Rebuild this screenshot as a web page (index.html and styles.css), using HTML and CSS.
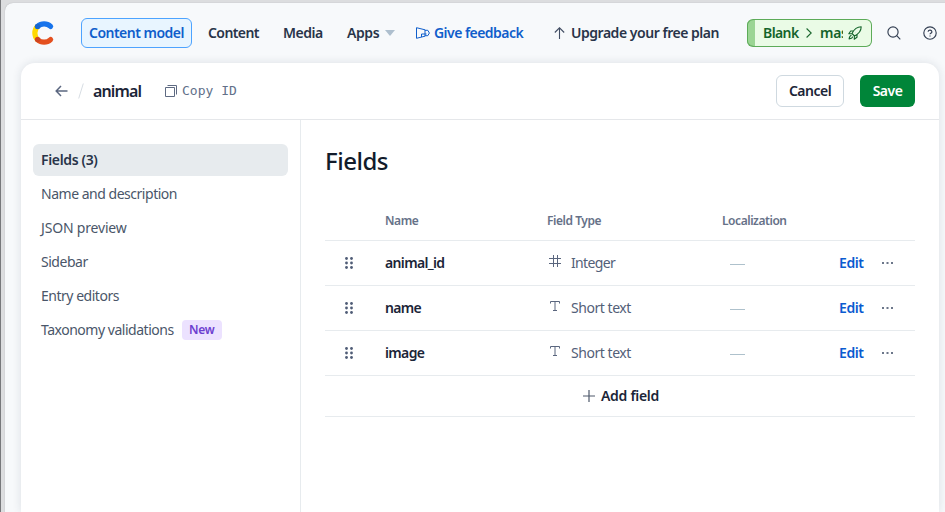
FILE: index.html
```html
<!DOCTYPE html>
<html lang="en">
<head>
<meta charset="utf-8">
<title>animal - Content model</title>
<link rel="stylesheet" href="styles.css">
</head>
<body>
<div class="app">
  <header class="topbar">
    <svg class="logo" width="24" height="26" viewBox="0 0 24 26" fill="none" stroke-width="5.2" stroke-linecap="round">
      <path d="M6.600 6.400A9.300 9.300 0 0 0 6.600 19.600" stroke="#ffd900"/>
      <path d="M6.600 6.400A9.500 9.500 0 0 1 19.600 6.400" stroke="#1773eb"/>
      <path d="M6.600 19.600A9.500 9.500 0 0 0 19.600 19.600" stroke="#e4501f"/>
      <circle cx="6.600" cy="6.400" r="2.700" fill="#1666d0"/>
      <circle cx="6.600" cy="19.600" r="2.700" fill="#cf4420"/>
    </svg>
    <nav class="nav">
      <a class="nav-item active">Content model</a>
      <a class="nav-item content">Content</a>
      <a class="nav-item media">Media</a>
      <a class="nav-item apps">Apps<svg class="caret" width="10" height="6" viewBox="0 0 10 6"><path d="M0 0h10L5 6z" fill="#aebfce"/></svg></a>
    </nav>
    <a class="feedback">
      <svg width="14" height="12" viewBox="0 0 14 12" fill="none" stroke="#0f5ecb"><path d="M.5.7v10.600L9 9.200V2.800L.5.7z"/><path d="M9 3.300h2.800l1.600 2.700-1.600 2.700H9M5.500 10v-3h5"/></svg>
      <span>Give feedback</span>
    </a>
    <a class="upgrade">
      <svg width="12" height="12" viewBox="0 0 12 12" fill="none" stroke="#414d63" stroke-width="1.1"><path d="M5.500 12V.8M.8 5.500 5.500.8l4.700 4.700"/></svg>
      <span>Upgrade your free plan</span>
    </a>
    <div class="environment">
      <span class="space">Blank</span>
      <svg class="chevron" width="6" height="10" viewBox="0 0 6 10" fill="none" stroke="#1a662c" stroke-width="1.1"><path d="M.6.5 5.200 5 .6 9.500"/></svg>
      <span class="env-name">master</span>
      <svg class="rocket" width="14" height="14" viewBox="0 0 14 14" fill="none" stroke="#14642b" stroke-width="1.100" stroke-linejoin="round"><path d="M4 7.500C6 3.500 9 .8 13.200.8c0 4.200-2.700 7.200-6.700 9.200zM5.300 5H2.700L.8 7.800l3.200-.3M9 8.700v2.600l-2.800 1.900.3-3.200M3.500 9.200c-1.800.3-2.200 2-2.400 3.700 1.700-.2 3.400-.6 3.700-2.400"/><path d="M7.500 6.500h.1"/></svg>
    </div>
    <svg class="search" width="14" height="14" viewBox="0 0 14 14" fill="none" stroke="#333f52" stroke-width="1.150"><circle cx="6" cy="6" r="5.100"/><path d="m9.700 9.700 3.600 3.600"/></svg>
    <svg class="help" width="14" height="14" viewBox="0 0 14 14" fill="none" stroke="#333f52" stroke-width="1.150"><circle cx="7" cy="7" r="6.200"/><path d="M5.100 5.800a1.900 1.700 0 1 1 2.500 1.600Q7 7.700 7 8.300"/><path d="M7 9.400v1.200"/></svg>
  </header>
  <main class="workbench">
    <div class="titlebar">
      <svg class="back" width="13" height="12" viewBox="0 0 13 12" fill="none" stroke="#5b6780" stroke-width="1.500"><path d="M12.500 6H1.200M6 1.100 1.200 6 6 10.900"/></svg>
      <svg class="slash" width="6" height="16" viewBox="0 0 6 16" stroke="#d7dde3"><path d="M5.300.5.700 15.500"/></svg>
      <h1 class="title">animal</h1>
      <svg class="copy" width="12" height="12" viewBox="0 0 12 12" fill="none" stroke="#5e6a82"><path d="M.5 2.500h9v9h-9zM2.500.5h9v9"/></svg>
      <span class="copy-id">Copy ID</span>
      <button class="button cancel">Cancel</button>
      <button class="button save">Save</button>
    </div>
    <div class="body">
      <aside class="sidebar">
        <a class="side-item selected">Fields (3)</a>
        <a class="side-item">Name and description</a>
        <a class="side-item wide">JSON preview</a>
        <a class="side-item">Sidebar</a>
        <a class="side-item">Entry editors</a>
        <a class="side-item">Taxonomy validations<span class="badge">New</span></a>
      </aside>
      <section class="fields">
        <h2 class="heading">Fields</h2>
        <div class="row head"><span></span><span>Name</span><span>Field Type</span><span>Localization</span></div>
        <div class="row">
          <svg class="grip" width="8" height="12" viewBox="0 0 8 12" fill="#4f5c76"><circle cx="1.500" cy="1.500" r="1.400"/><circle cx="6.500" cy="1.500" r="1.400"/><circle cx="1.500" cy="6" r="1.400"/><circle cx="6.500" cy="6" r="1.400"/><circle cx="1.500" cy="10.500" r="1.400"/><circle cx="6.500" cy="10.500" r="1.400"/></svg>
          <strong class="name">animal_id</strong>
          <span class="type"><svg width="12" height="12" viewBox="0 0 12 12" fill="none" stroke="#5a667e"><path d="M4.500 0v12M8.500 0v12M0 3.500h12M0 8.500h12"/></svg><span class="integer">Integer</span></span>
          <span class="dash"></span><a class="edit">Edit</a>
          <svg class="more" width="11" height="2" viewBox="0 0 11 2" fill="#6c778a"><path d="M0 0h2v2H0zM4.500 0h2v2h-2zM9 0h2v2H9z"/></svg>
        </div>
        <div class="row">
          <svg class="grip" width="8" height="12" viewBox="0 0 8 12" fill="#4f5c76"><circle cx="1.500" cy="1.500" r="1.400"/><circle cx="6.500" cy="1.500" r="1.400"/><circle cx="1.500" cy="6" r="1.400"/><circle cx="6.500" cy="6" r="1.400"/><circle cx="1.500" cy="10.500" r="1.400"/><circle cx="6.500" cy="10.500" r="1.400"/></svg>
          <strong class="name">name</strong>
          <span class="type"><svg width="12" height="12" viewBox="0 0 12 12" fill="none" stroke="#5a667e"><path d="M1.500 3.500v-2h9v2M6 1.500v9.500M4 10.500h4"/></svg><span>Short text</span></span>
          <span class="dash"></span><a class="edit">Edit</a>
          <svg class="more" width="11" height="2" viewBox="0 0 11 2" fill="#6c778a"><path d="M0 0h2v2H0zM4.500 0h2v2h-2zM9 0h2v2H9z"/></svg>
        </div>
        <div class="row">
          <svg class="grip" width="8" height="12" viewBox="0 0 8 12" fill="#4f5c76"><circle cx="1.500" cy="1.500" r="1.400"/><circle cx="6.500" cy="1.500" r="1.400"/><circle cx="1.500" cy="6" r="1.400"/><circle cx="6.500" cy="6" r="1.400"/><circle cx="1.500" cy="10.500" r="1.400"/><circle cx="6.500" cy="10.500" r="1.400"/></svg>
          <strong class="name">image</strong>
          <span class="type"><svg width="12" height="12" viewBox="0 0 12 12" fill="none" stroke="#5a667e"><path d="M1.500 3.500v-2h9v2M6 1.500v9.500M4 10.500h4"/></svg><span>Short text</span></span>
          <span class="dash"></span><a class="edit">Edit</a>
          <svg class="more" width="11" height="2" viewBox="0 0 11 2" fill="#6c778a"><path d="M0 0h2v2H0zM4.500 0h2v2h-2zM9 0h2v2H9z"/></svg>
        </div>
        <div class="add"><svg width="12" height="12" viewBox="0 0 12 12" stroke="#4e596b" stroke-width="1.200"><path d="M6 0v12M0 6h12"/></svg><span>Add field</span></div>
      </section>
    </div>
  </main>
</div>
</body>
</html>
```

FILE: styles.css
```css
* { box-sizing: border-box; }
body {
  margin: 0;
  height: 512px;
  overflow: hidden;
  padding: 3px 0 0 4px;
  background: #dcdddf;
  border-left: 1px solid #77787b;
  font: 400 14px/20px "Noto Sans", "Open Sans", sans-serif;
  color: #1b2537;
}
svg { flex: none; display: block; }
a, span, strong { white-space: nowrap; }
.app { height: 509px; background: #f7f9fb; border-radius: 8px 0 0 0; box-shadow: 0 0 1px #9b9da1; }
.topbar { height: 60px; padding-left: 26px; display: flex; align-items: center; font-weight: 600; color: #283449; }
.logo { margin-right: 26px; }
.nav { display: flex; width: 335px; align-items: center; }
.nav-item { display: flex; align-items: center; }
.nav-item.active { width: 111px; height: 30px; padding-left: 7px; margin-right: 16px; border: 1px solid #4da3ff; border-radius: 6px; background: #e8f5ff; color: #0f5ecb; letter-spacing: -.52px; }
.content { width: 75px; letter-spacing: -.58px; }
.media { width: 64px; letter-spacing: -.45px; }
.apps { letter-spacing: -.4px; justify-content: space-between; width: 48px; }
.feedback, .upgrade { display: flex; align-items: center; }
.feedback { width: 138px; gap: 4px; color: #0f5ecb; letter-spacing: -.54px; }
.upgrade { width: 193px; gap: 5px; letter-spacing: -.47px; }
.environment { width: 125px; height: 28px; display: flex; align-items: center; padding-left: 8px; border: 1px solid #5dab59; border-left: 0; border-radius: 6px; background: linear-gradient(90deg, #9bd594 8px, #eafbe6 8px); box-shadow: inset 1px 0 #5dab59; color: #14642b; letter-spacing: -.6px; }
.space { width: 51px; padding-left: 8px; }
.chevron { margin-right: 8px; }
.env-name { width: 23px; overflow: hidden; margin-right: 5px; letter-spacing: -.3px; }
.search { margin: 0 22px 0 15px; }
.workbench { width: 918px; height: 449px; margin-left: 16px; background: #fff; border-radius: 14px 14px 0 0; box-shadow: 0 0 10px rgba(25, 45, 65, .12); }
.titlebar { height: 57px; padding: 0 24px 0 34px; display: flex; align-items: center; border-bottom: 1px solid #e5e7ea; }
.slash { margin: 0 9px 0 10px; }
.title { width: 72px; margin: 0; font-size: 16px; line-height: 24px; font-weight: 600; letter-spacing: -.85px; }
.copy { margin-right: 5px; }
.copy-id { font: 13px/20px "DejaVu Sans Mono", monospace; color: #627089; }
.button { height: 32px; border-radius: 6px; padding: 0; font: 600 14px/20px "Noto Sans", sans-serif; letter-spacing: -.5px; }
.cancel { width: 68px; margin-left: auto; margin-right: 16px; border: 1px solid #cfd9e0; background: #fff; color: #1b2537; }
.save { width: 55px; border: 0; background: #008539; color: #fff; }
.body { display: flex; height: 392px; }
.sidebar { width: 280px; padding: 24px 12px; border-right: 1px solid #e7ebee; display: flex; flex-direction: column; gap: 2px; }
.side-item { height: 32px; padding: 0 8px; display: flex; align-items: center; color: #4a5669; letter-spacing: -.48px; border-radius: 6px; }
.wide { letter-spacing: -.18px; }
.selected { background: #e7ebee; color: #283449; font-weight: 600; letter-spacing: -.35px; }
.badge { width: 40px; height: 20px; margin-left: 8px; text-align: center; font-size: 12px; font-weight: 600; letter-spacing: -.3px; color: #6c3ecf; background: #ece2ff; border-radius: 4px; }
.fields { flex: 1; padding: 24px 24px 0; }
.heading { margin: 0 0 24px; height: 33px; font-size: 24px; line-height: 33px; font-weight: 500; letter-spacing: -.5px; color: #111b2b; }
.row { height: 45px; display: grid; grid-template-columns: 60px 162px 175px 117px 43px 1fr; align-items: center; border-bottom: 1px solid #e7ebee; }
.head { height: 40px; font-size: 12px; font-weight: 600; color: #667188; letter-spacing: -.45px; }
.grip { margin-left: 20px; }
.name { font-weight: 600; letter-spacing: -.65px; }
.type { display: flex; align-items: center; gap: 10px; padding-left: 2px; color: #536078; letter-spacing: -.45px; }
.integer { letter-spacing: -.65px; }
.type svg { position: relative; top: -2px; }
.dash { width: 15px; height: 1px; margin: 2px 0 0 8px; background: #aec1cc; }
.edit { font-weight: 600; color: #0b5bd0; letter-spacing: -.4px; }
.more { margin-top: -1px; }
.add { height: 41px; display: flex; align-items: center; justify-content: center; gap: 6px; padding-left: 2px; border-bottom: 1px solid #e7ebee; font-weight: 600; letter-spacing: -.3px; }
```
